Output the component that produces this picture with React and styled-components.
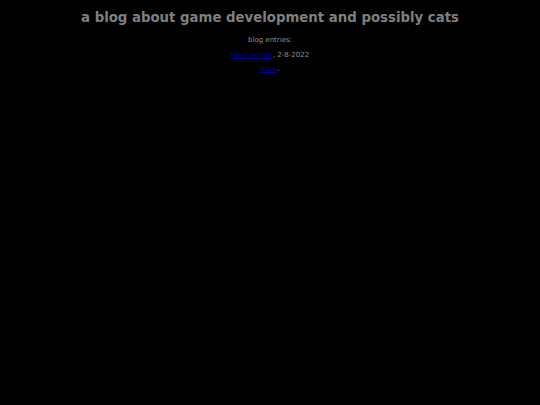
import React from "react";
import styled, { createGlobalStyle } from "styled-components";

const GlobalStyle = createGlobalStyle`
  html, body {
    margin: 0;
    padding: 0;
    background: #000;
  }
  body {
    font-family: "DejaVu Sans", sans-serif;
    color: #8a8a8a;
  }
`;

const Page = styled.div`
  min-height: 405px;
  background: #000;
  display: flex;
  flex-direction: column;
  align-items: center;
  padding-top: 10px;
`;

const Title = styled.h1`
  margin: 0 0 10px;
  font-size: 13.3px;
  font-weight: bold;
  color: #7f7f7f;
  line-height: 16px;
`;

const Line = styled.p`
  margin: 0 0 6px;
  font-size: 7px;
  line-height: 8.5px;
  color: #8f8f8f;
`;

const Link = styled.a`
  color: #00009a;
`;

export default function App() {
  return (
    <>
      <GlobalStyle />
      <Page>
        <Title>a blog about game development and possibly cats</Title>
        <Line>blog entries:</Line>
        <Line>
          <Link href="#">Hello world!</Link>, 2-8-2022
        </Line>
        <Line>
          <Link href="#">back</Link>.
        </Line>
      </Page>
    </>
  );
}
